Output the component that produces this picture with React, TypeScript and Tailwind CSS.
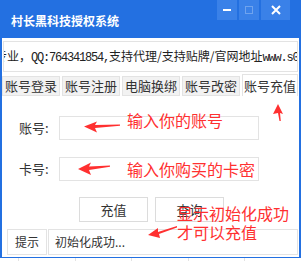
const tabs = ["账号登录", "账号注册", "电脑换绑", "账号改密", "账号充值"];

const cjk = "font-['Noto_Sans_CJK_SC','Noto_Sans',sans-serif]";

const App = () => {
  return (
    <div className={`relative w-[301px] h-[261px] overflow-hidden bg-white ${cjk}`}>
      {/* window */}
      <div className="flex flex-col h-[258px] bg-[#2370e1] pl-[2px] pr-[2px] pb-[1px]">
        {/* title bar */}
        <div className="flex h-[38px] shrink-0">
          <div className="flex-1 pl-[9px] pt-[12px] text-[12px] font-bold leading-[18px] text-white">
            村长黑科技授权系统
          </div>
          <div className="flex gap-[2px] pr-[9px]">
            <div className="flex h-[20px] w-[20px] items-center justify-center bg-[#3a81e8]">
              <div className="h-[2px] w-[8px] bg-white"></div>
            </div>
            <div className="flex h-[20px] w-[20px] items-center justify-center bg-[#3a81e8]">
              <div className="h-[8px] w-[8px] border border-[#6fa3ee]"></div>
            </div>
            <div className="flex h-[20px] w-[29px] items-center justify-center bg-[#3a81e8]">
              <svg width="10" height="10" viewBox="0 0 10 10">
                <path d="M1 1L9 9M9 1L1 9" stroke="white" strokeWidth="2" />
              </svg>
            </div>
          </div>
        </div>

        {/* content */}
        <div className="flex flex-1 flex-col bg-white">
          {/* marquee */}
          <div className="mx-[1px] mt-[3px] flex h-[31px] items-center overflow-hidden border border-[#e3e3e3]">
            <div className="ml-[-9px] whitespace-nowrap text-[12px] leading-[14px] text-[#222]">
              <span>专业，</span>
              <span className="font-['Liberation_Mono',monospace] tracking-[-1.2px]">QQ:764341854,</span>
              <span>支持代理/支持贴牌/官网地址</span>
              <span className="font-['Liberation_Mono',monospace] tracking-[-1.2px]">www.s0</span>
            </div>
          </div>

          {/* tabs */}
          <div className="flex gap-[2px] pt-[2px]">
            {tabs.map((t, i) =>
              i === 4 ? (
                <div
                  key={t}
                  className="flex h-[22px] w-[56px] items-center justify-center border border-b-0 border-[#e3e3e3] bg-white text-[13px] text-[#333]"
                >
                  {t}
                </div>
              ) : (
                <div
                  key={t}
                  className="mt-[2px] flex h-[20px] w-[58px] items-center justify-center border border-[#e3e3e3] bg-[#f2f2f2] text-[13px] text-[#333]"
                >
                  {t}
                </div>
              )
            )}
          </div>

          {/* form */}
          <div className="flex flex-col gap-[17px] pt-[20px]">
            <div className="flex items-center">
              <div className="w-[57px] pl-[17px] text-[13px] text-[#333]">账号:</div>
              <div className="h-[24px] w-[200px] border border-[#e3e3e3]"></div>
            </div>
            <div className="flex items-center">
              <div className="w-[57px] pl-[17px] text-[13px] text-[#333]">卡号:</div>
              <div className="h-[24px] w-[200px] border border-[#e3e3e3]"></div>
            </div>
          </div>

          {/* buttons */}
          <div className="flex gap-[7px] pl-[77px] pt-[16px]">
            <button className="h-[25px] w-[69px] border border-[#dcdcdc] bg-white text-[13px] text-[#333]">充值</button>
            <button className="h-[25px] w-[69px] border border-[#dcdcdc] bg-white text-[13px] text-[#333]">查询</button>
          </div>

          {/* status */}
          <div className="flex gap-[1px] pl-[5px] pr-[1px] pt-[7px]">
            <div className="flex h-[26px] w-[40px] items-center justify-center border border-[#e3e3e3] text-[12px] text-[#333]">
              提示
            </div>
            <div className="flex h-[26px] flex-1 items-center border border-[#e3e3e3] pl-[6px] text-[12px] text-[#333]">
              初始化成功...
            </div>
          </div>
        </div>
      </div>

      {/* grid below the window */}
      <div className="flex h-[3px] pl-[18px]">
        {[0, 1, 2, 3, 4].map((i) => (
          <div key={i} className="w-[60px] border-l border-[#e3e3e3]"></div>
        ))}
      </div>

      {/* red annotations */}
      <div className="absolute left-[127px] top-[111px] text-[16px] leading-[18px] text-[#ff3030]">输入你的账号</div>
      <div className="absolute left-[127px] top-[160px] text-[16px] leading-[18px] text-[#ff3030]">输入你购买的卡密</div>
      <div className="absolute left-[177px] top-[204px] text-[16px] leading-[19px] text-[#ff3030]">
        显示初始化成功
        <br />
        才可以充值
      </div>
      <svg className="pointer-events-none absolute left-0 top-0" width="301" height="261" viewBox="0 0 301 261">
        <g fill="#ff3030">
          <polygon points="84,126.5 97,121.5 95,125 120,124.5 120,125.8 95,128 97,132.5" />
          <polygon points="78,169 91,162.5 89,166.5 110,165.5 110,166.8 89,170 91,175" />
          <polygon points="148,235 158,228 158,232 177,226 177,227.5 159,234 160,238" />
          <polygon points="278,104 283,114 280,113 280.8,121 279.5,121 278,113 273,114" />
        </g>
      </svg>
    </div>
  );
};

export default App;
